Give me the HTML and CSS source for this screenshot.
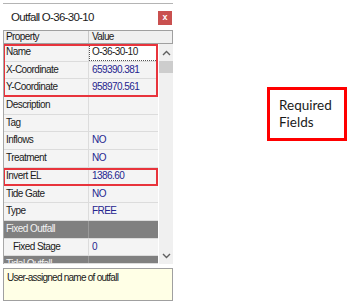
FILE: index.html
```html
<!DOCTYPE html>
<html>
<head>
<meta charset="utf-8">
<link rel="stylesheet" href="styles.css">
</head>
<body>
<div class="page">
  <div class="panel">
    <div class="titlebar">
      <span class="title">Outfall O-36-30-10</span>
      <span class="close">x</span>
    </div>
    <div class="grid">
      <div class="head">
        <div class="hc prop">Property</div>
        <div class="hc val">Value</div>
      </div>
      <div class="body">
        <div class="rows">
          <div class="hl">
            <div class="row"><div class="c prop">Name</div><div class="c val focus">O-36-30-10</div></div>
            <div class="row"><div class="c prop">X-Coordinate</div><div class="c val blue">659390.381</div></div>
            <div class="row"><div class="c prop">Y-Coordinate</div><div class="c val blue">958970.561</div></div>
          </div>
          <div class="row"><div class="c prop">Description</div><div class="c val"></div></div>
          <div class="row"><div class="c prop">Tag</div><div class="c val"></div></div>
          <div class="row"><div class="c prop">Inflows</div><div class="c val blue">NO</div></div>
          <div class="row"><div class="c prop">Treatment</div><div class="c val blue">NO</div></div>
          <div class="hl">
            <div class="row"><div class="c prop">Invert EL</div><div class="c val blue">1386.60</div></div>
          </div>
          <div class="row"><div class="c prop">Tide Gate</div><div class="c val blue">NO</div></div>
          <div class="row"><div class="c prop">Type</div><div class="c val blue">FREE</div></div>
          <div class="row cat"><div class="c prop">Fixed Outfall</div><div class="c val"></div></div>
          <div class="row"><div class="c prop indent">Fixed Stage</div><div class="c val blue">0</div></div>
          <div class="row cat cut"><div class="c prop">Tidal Outfall</div><div class="c val"></div></div>
        </div>
        <div class="scroll">
          <div class="arrow">
            <svg width="9" height="6" viewBox="0 0 9 6"><path d="M1 5 L4.5 1.5 L8 5" fill="none" stroke="#606060" stroke-width="1.4"/></svg>
          </div>
          <div class="thumb"></div>
          <div class="track"></div>
          <div class="arrow">
            <svg width="9" height="6" viewBox="0 0 9 6"><path d="M1 1 L4.5 4.5 L8 1" fill="none" stroke="#606060" stroke-width="1.4"/></svg>
          </div>
        </div>
      </div>
    </div>
    <div class="desc">User-assigned name of outfall</div>
  </div>
  <div class="callout">Required<br>Fields</div>
</div>
</body>
</html>
```
FILE: styles.css
```css
* { box-sizing: border-box; }
body {
  margin: 0;
  background: #ffffff;
  font-family: "Liberation Sans", Arial, sans-serif;
}
.page {
  display: flex;
  align-items: flex-start;
  padding: 3px 0 0 3px;
}
.panel {
  width: 170px;
  border-top: 1px solid #b4b4b4;
}
.titlebar {
  height: 26px;
  display: flex;
  align-items: center;
  justify-content: space-between;
  padding: 0 1px 0 8px;
}
.title {
  font-size: 11.5px;
  letter-spacing: -0.7px;
  color: #1a1a1a;
  margin-top: -1px;
}
.close {
  width: 14px;
  height: 14px;
  background: #c9504f;
  color: #fff;
  font-size: 9px;
  font-weight: bold;
  display: flex;
  align-items: center;
  justify-content: center;
  line-height: 1;
  margin-top: 1px;
}
.grid {
  border-left: 1px solid #a8a8a8;
}
.head {
  display: flex;
  height: 14px;
  border: 1px solid #a0a0a0;
  border-left: none;
  background: #f0f0f0;
}
.hc {
  font-size: 10px;
  letter-spacing: -0.6px;
  line-height: 12px;
  color: #1a1a1a;
  padding-left: 2px;
}
.hc.prop { width: 85px; border-right: 1px solid #c8c8c8; }
.hc.val { padding-left: 3px; }
.body {
  display: flex;
  height: 220px;
  overflow: hidden;
}
.rows {
  width: 155px;
}
.hl {
  position: relative;
}
.hl::after {
  content: "";
  position: absolute;
  left: -1px;
  top: 0;
  right: 0;
  bottom: 0;
  border: 2px solid #e8343c;
}
.row {
  display: flex;
  height: 17.7px;
  border-bottom: 1px solid #dcdcdc;
  background: #f4f4f4;
}
.c {
  font-size: 10px;
  letter-spacing: -0.55px;
  line-height: 16px;
  color: #1a1a1a;
  padding-left: 2px;
  white-space: nowrap;
  overflow: hidden;
}
.c.prop { width: 85px; border-right: 1px solid #dcdcdc; }
.c.val { flex: 1; padding-left: 3px; }
.c.indent { padding-left: 9px; }
.c.blue { color: #25258f; }
.c.focus {
  background: #ffffff;
  border: 1px dotted #555;
  line-height: 14px;
  padding-left: 2px;
}
.row.cat { background: #808080; }
.row.cat .c { color: #f2f2f2; border-right-color: #9a9a9a; }
.row.cut { height: 8px; }
.scroll {
  width: 14px;
  margin-left: 1px;
  background: #f0f0f0;
  display: flex;
  flex-direction: column;
  height: 220px;
}
.arrow {
  height: 17px;
  display: flex;
  align-items: center;
  justify-content: center;
}
.thumb {
  height: 12px;
  background: #cdcdcd;
}
.track { flex: 1; }
.desc {
  margin-top: 4px;
  height: 33px;
  background: #ffffe6;
  border: 1px solid #a0a0a0;
  font-size: 10px;
  letter-spacing: -0.75px;
  padding: 3px 3px;
  color: #1a1a1a;
}
.callout {
  margin: 84px 0 0 94px;
  width: 80px;
  height: 54px;
  border: 3px solid #ff0000;
  font-family: Lato, "Open Sans", sans-serif;
  font-size: 13.5px;
  line-height: 17px;
  padding: 7px 0 0 9px;
  color: #1a1a1a;
}
```
